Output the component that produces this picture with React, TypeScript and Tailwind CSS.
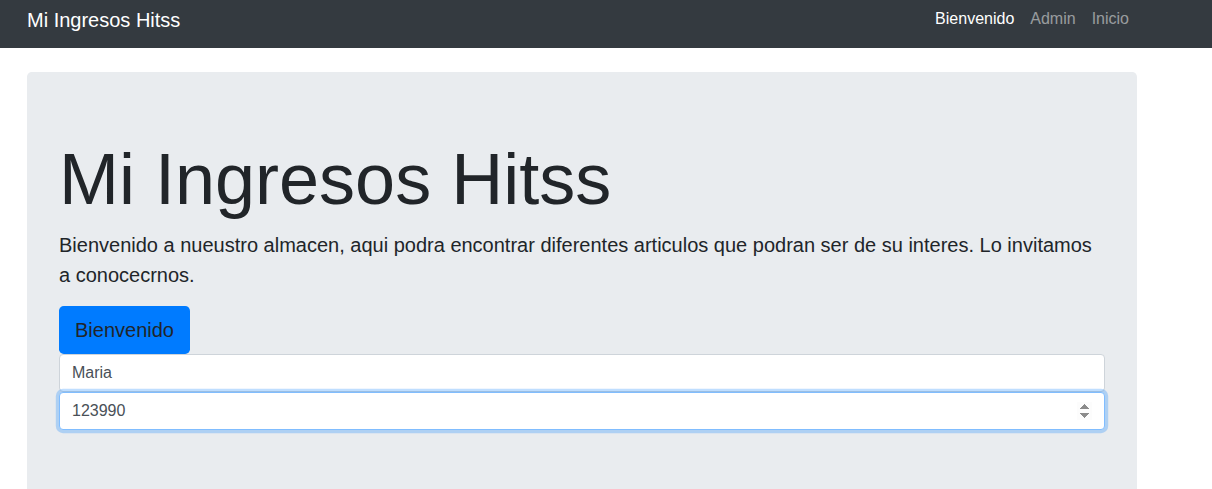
import React from "react";

export default function App() {
  return (
    <div className="min-h-[489px] bg-white text-[#212529]" style={{ fontFamily: '"Liberation Sans", Arial, sans-serif' }}>
      <nav className="h-[48px] bg-[#343a40]">
        <div className="ml-[27px] flex h-full w-[1110px] items-start justify-between">
          <a className="mt-[5px] text-[20px] leading-[30px] text-white">Mi Ingresos Hitss</a>
          <ul className="mt-[7px] flex items-center text-[16px] leading-[24px]">
            <li className="px-2 text-white">Bienvenido</li>
            <li className="px-2 text-white/50">Admin</li>
            <li className="px-2 text-white/50">Inicio</li>
          </ul>
        </div>
      </nav>
      <div className="ml-[27px] mt-[24px] w-[1110px] rounded-[4.8px] bg-[#e9ecef] px-8 py-16">
        <h1 className="mb-2 text-[72px] font-light leading-[1.2]">Mi Ingresos Hitss</h1>
        <p className="mb-4 text-[20px] leading-[30px]">
          Bienvenido a nueustro almacen, aqui podra encontrar diferentes articulos que podran ser de su interes. Lo invitamos a conocecrnos.
        </p>
        <button className="h-[48px] rounded-[4.8px] bg-[#007bff] px-4 text-[20px] leading-[30px] text-[#212529]">
          Bienvenido
        </button>
        <input
          type="text"
          defaultValue="Maria"
          className="block h-[38px] w-full rounded-[4px] border border-[#ced4da] bg-white px-3 text-[16px] text-[#495057] outline-none"
        />
        <input
          type="number"
          defaultValue={123990}
          autoFocus
          className="block h-[38px] w-full rounded-[4px] border border-[#80bdff] bg-white px-3 text-[16px] text-[#495057] shadow-[0_0_0_3.2px_rgba(0,123,255,0.25)] outline-none"
        />
      </div>
    </div>
  );
}
